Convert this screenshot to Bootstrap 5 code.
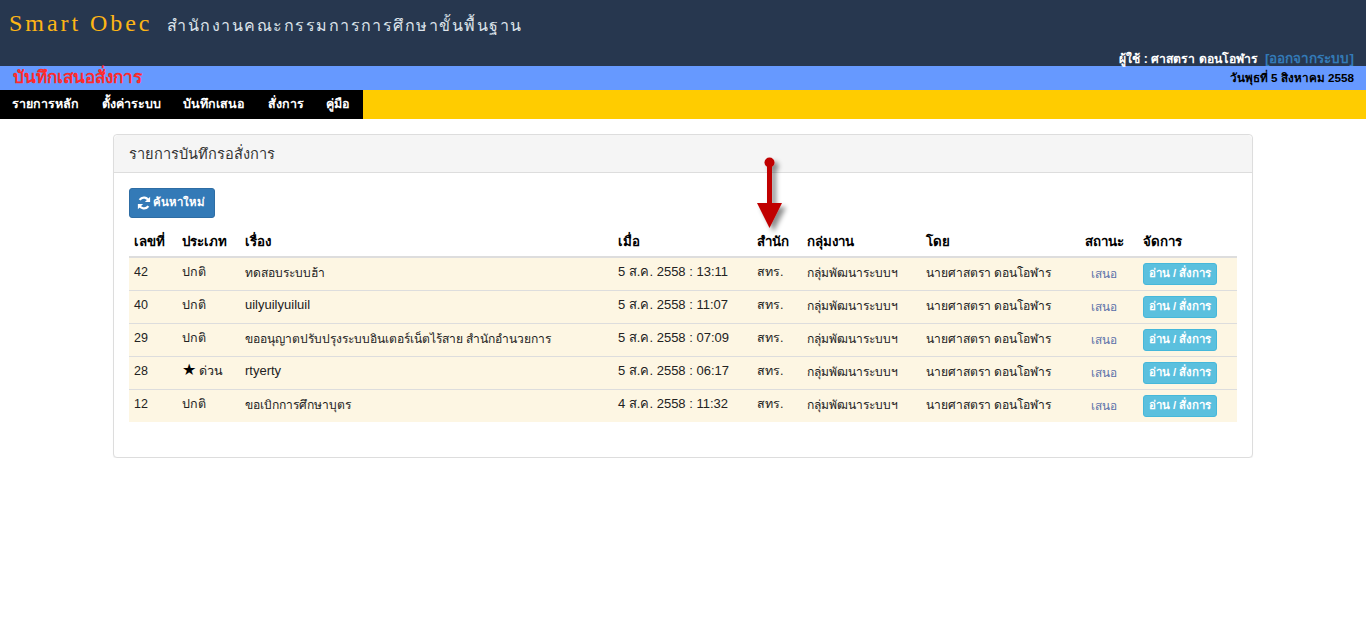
<!DOCTYPE html>
<html lang="th">
<head>
    <meta charset="UTF-8">
    <title>Smart Obec</title>
    <meta name="viewport" content="width=device-width, initial-scale=1">
    <link href="https://cdn.jsdelivr.net/npm/bootstrap@5.3.0/dist/css/bootstrap.min.css" rel="stylesheet">
    <style>
        body {
            background-color: #fff;
            color: #222;
            font-family: "Liberation Sans", "Noto Sans", sans-serif;
            font-size: 13px;
        }
        .top-head {
            background-color: #27374f;
            height: 66px;
            padding: 6px 12px 0 9px;
        }
        .brand-name {
            font-family: "Liberation Serif", serif;
            font-size: 24px;
            letter-spacing: 2.95px;
            color: #fdb515;
            line-height: 34px;
        }
        .brand-org {
            font-size: 16px;
            letter-spacing: 1.47px;
            color: #dde3ea;
            margin: 5px 0 0 15px;
        }
        .user-line {
            color: #fff;
            font-weight: bold;
            font-size: 12.2px;
            line-height: 16px;
            margin-top: 11px;
        }
        .user-line a {
            color: #337ab7;
            font-size: 13.5px;
            text-decoration: none;
            margin-left: 4px;
        }
        .page-bar {
            background-color: #6699ff;
            height: 24px;
            padding: 0 12px 0 13px;
        }
        .page-title {
            color: #ff2a2a;
            font-size: 17.2px;
            font-weight: bold;
        }
        .today {
            color: #000;
            font-size: 11.7px;
            font-weight: bold;
        }
        .menu-bar {
            background-color: #ffcc00;
            height: 29px;
        }
        .menu-list {
            background-color: #000;
            width: 363px;
            gap: 22.5px;
            padding-left: 12px;
        }
        .menu-list a {
            color: #fff;
            font-weight: bold;
            text-decoration: none;
            font-size: 12.5px;
            line-height: 29px;
            white-space: nowrap;
        }
        .panel-box {
            width: 1140px;
            height: 324px;
            margin: 15px 0 0 113px;
            border-color: #ddd;
            border-radius: 4px;
            box-shadow: 0 1px 1px rgba(0,0,0,.05);
        }
        .panel-box .card-header {
            background-color: #f5f5f5;
            border-color: #ddd;
            height: 38px;
            padding: 8px 15px;
            font-size: 14.6px;
            line-height: 22px;
            color: #333;
        }
        .panel-box .card-body {
            padding: 15px;
        }
        .btn-renew {
            background-color: #337ab7;
            border: 1px solid #2e6da4;
            color: #fff;
            font-size: 11.4px;
            font-weight: bold;
            height: 30px;
            width: 86px;
            padding: 0 2px 0 0;
            gap: 2px;
            border-radius: 3px;
            margin-bottom: 7px;
        }
        .job-table {
            table-layout: fixed;
            width: 1108px;
            margin: 0;
            font-size: 12.5px;
            color: #222;
        }
        .job-table th {
            font-size: 13.3px;
            color: #000;
            height: 32px;
            padding: 6px 5px 4px;
            vertical-align: middle;
            border-bottom: 2px solid #ddd;
        }
        .job-table td {
            background-color: #fdf6e3;
            box-shadow: none;
            height: 33px;
            padding: 3px 5px 7px;
            vertical-align: middle;
            border-bottom: 1px solid #ddd;
        }
        .job-table tr:last-child td {
            border-bottom: 0;
            height: 32px;
        }
        .job-table td.text-wide {
            font-size: 13px;
        }
        .job-table td.text-thin {
            font-size: 12.1px;
            padding: 4px 5px 6px;
        }
        .job-table td.state-text {
            color: #5a6fa8;
            font-size: 11.8px;
            padding: 6px 5px 4px 11px;
        }
        .job-table td.act-cell {
            padding: 5px;
        }
        .star-mark {
            font-size: 16px;
            line-height: 1;
            color: #000;
        }
        .btn-read {
            background-color: #5bc0de;
            border: 1px solid #46b8da;
            color: #fff;
            font-size: 11.4px;
            font-weight: bold;
            height: 22px;
            width: 74px;
            padding: 0;
            border-radius: 3px;
            display: block;
        }
        .note-arrow {
            position: absolute;
            left: 750px;
            top: 152px;
        }
    </style>
</head>
<body>
<header class="top-head">
    <div class="d-flex align-items-center">
        <span class="brand-name">Smart Obec</span>
        <span class="brand-org">สำนักงานคณะกรรมการการศึกษาขั้นพื้นฐาน</span>
    </div>
    <div class="user-line text-end">ผู้ใช้ : ศาสตรา ดอนโอฬาร <a href="#">[ออกจากระบบ]</a></div>
</header>
<div class="page-bar d-flex justify-content-between align-items-center">
    <span class="page-title">บันทึกเสนอสั่งการ</span>
    <span class="today">วันพุธที่ 5 สิงหาคม 2558</span>
</div>
<nav class="menu-bar">
    <div class="menu-list d-flex">
        <a href="#">รายการหลัก</a>
        <a href="#">ตั้งค่าระบบ</a>
        <a href="#">บันทึกเสนอ</a>
        <a href="#">สั่งการ</a>
        <a href="#">คู่มือ</a>
    </div>
</nav>

<div class="card panel-box">
    <div class="card-header">รายการบันทึกรอสั่งการ</div>
    <div class="card-body">
        <button type="button" class="btn-renew d-flex align-items-center justify-content-center">
            <svg width="14" height="14" viewBox="0 0 16 16" fill="none" stroke="#fff" stroke-width="2.6">
                <path d="M13.6 6A6 6 0 0 0 3 4.4"/>
                <path d="M2.4 10A6 6 0 0 0 13 11.6"/>
                <path d="M15 .8v6H9z" fill="#fff" stroke="none"/>
                <path d="M1 15.2v-6h6z" fill="#fff" stroke="none"/>
            </svg>
            ค้นหาใหม่
        </button>
        <table class="table job-table">
            <colgroup>
                <col style="width:48px"><col style="width:63px"><col style="width:373px"><col style="width:139px"><col style="width:50px"><col style="width:119px"><col style="width:159px"><col style="width:58px"><col style="width:99px">
            </colgroup>
            <thead>
                <tr><th>เลขที่</th><th>ประเภท</th><th>เรื่อง</th><th>เมื่อ</th><th>สำนัก</th><th>กลุ่มงาน</th><th>โดย</th><th>สถานะ</th><th>จัดการ</th></tr>
            </thead>
            <tbody id="rows"></tbody>
        </table>
    </div>
</div>

<svg class="note-arrow" width="40" height="84" viewBox="0 0 40 84">
    <defs>
        <filter id="soft" x="-40%" y="-20%" width="190%" height="140%">
            <feDropShadow dx="4" dy="4" stdDeviation="2.5" flood-color="#000" flood-opacity=".45"/>
        </filter>
    </defs>
    <g filter="url(#soft)" fill="#c00000">
        <circle cx="19.5" cy="10.5" r="5"/>
        <rect x="17" y="10" width="5" height="44"/>
        <path d="M7 51h25L19.5 76z"/>
    </g>
</svg>

<script>
    const data = [
        ["42", "ปกติ", "ทดสอบระบบฮ้า", "5 ส.ค. 2558 : 13:11", "text-thin"],
        ["40", "ปกติ", "uilyuilyuiluil", "5 ส.ค. 2558 : 11:07", "text-wide"],
        ["29", "ปกติ", "ขออนุญาตปรับปรุงระบบอินเตอร์เน็ตไร้สาย สำนักอำนวยการ", "5 ส.ค. 2558 : 07:09", "text-thin"],
        ["28", '<span class="star-mark">★</span> ด่วน', "rtyerty", "5 ส.ค. 2558 : 06:17", "text-wide"],
        ["12", "ปกติ", "ขอเบิกการศึกษาบุตร", "4 ส.ค. 2558 : 11:32", "text-thin"]
    ];
    document.getElementById("rows").innerHTML = data.map(r => `
        <tr>
            <td>${r[0]}</td><td>${r[1]}</td><td class="${r[4]}">${r[2]}</td><td class="text-wide">${r[3]}</td>
            <td>สทร.</td><td class="text-thin">กลุ่มพัฒนาระบบฯ</td><td class="text-thin">นายศาสตรา ดอนโอฬาร</td>
            <td class="state-text">เสนอ</td>
            <td class="act-cell"><button type="button" class="btn-read">อ่าน / สั่งการ</button></td>
        </tr>`).join("");
</script>
<script src="https://cdn.jsdelivr.net/npm/bootstrap@5.3.0/dist/js/bootstrap.bundle.min.js"></script>
</body>
</html>
